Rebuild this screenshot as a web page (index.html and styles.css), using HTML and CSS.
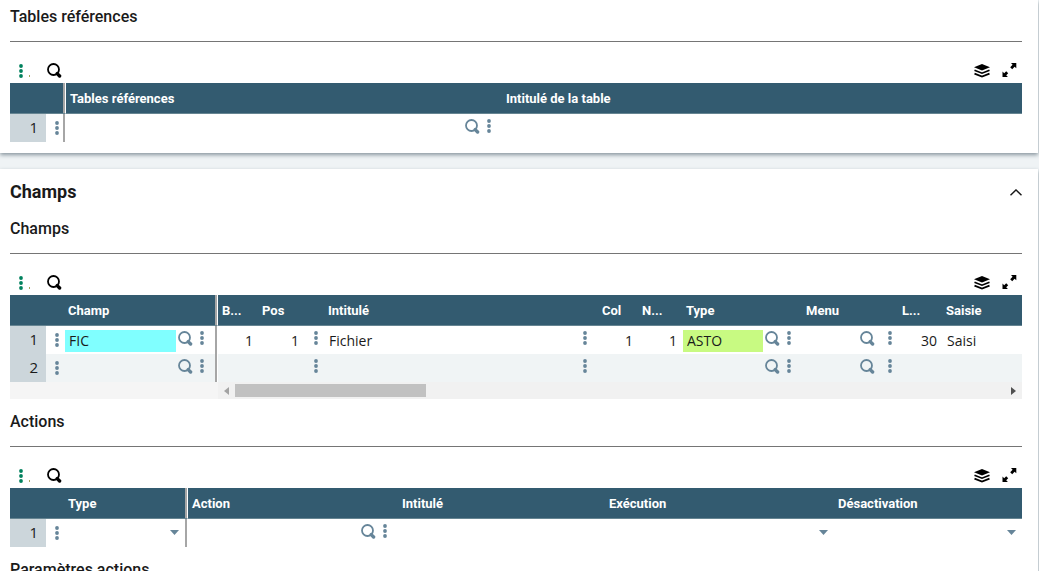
FILE: index.html
```html
<!DOCTYPE html>
<html lang="fr">
<head>
<meta charset="utf-8">
<title>Tables et champs</title>
<link rel="stylesheet" href="styles.css">
</head>
<body>
<svg class="sprite" aria-hidden="true">
  <symbol id="dots" viewBox="0 0 5 14"><circle cx="2" cy="2" r="1.9"/><circle cx="2" cy="7" r="1.9"/><circle cx="2" cy="12" r="1.9"/></symbol>
  <symbol id="search" viewBox="0 0 15 15"><circle cx="6.5" cy="6.5" r="5.5" fill="none" stroke="currentColor" stroke-width="1.8"/><path d="M10.2 10.6 12.6 13" stroke="currentColor" stroke-width="3.4" stroke-linecap="round"/></symbol>
  <symbol id="layers" viewBox="0 0 16 14"><path d="M8 0 16 3.2 8 6.4 0 3.2Z"/><path d="M.5 6.2 8 9.2l7.5-3M.5 9.6 8 12.6 15.5 9.6" fill="none" stroke="currentColor" stroke-width="1.7"/></symbol>
  <symbol id="expand" viewBox="0 0 15 15"><path d="M9 0H14.3V5.3L12.6 3.8 10.2 6.3 8.2 4.3 10.6 1.8ZM.5 8.6 2.2 10.2 4.2 8.3 6.2 10.3 4.2 12.3 5.9 14H.5Z"/></symbol>
  <symbol id="caret" viewBox="0 0 9 5"><path d="M0 0H9L4.5 5Z"/></symbol>
</svg>
<main class="page">
  <section class="card card-first">
    <section class="block">
      <h3 class="block-title">Tables références</h3>
      <div class="toolbar">
        <button class="icon-button tool-menu" aria-label="Menu"><svg class="i-dots"><use href="#dots"/></svg><span class="tick"></span></button>
        <button class="icon-button" aria-label="Rechercher"><svg class="i-search"><use href="#search"/></svg></button>
        <button class="icon-button push" aria-label="Couches"><svg class="i-layers"><use href="#layers"/></svg></button>
        <button class="icon-button" aria-label="Agrandir"><svg class="i-search"><use href="#expand"/></svg></button>
      </div>
      <table class="grid">
        <colgroup><col class="w-num"><col class="w-menu-split"><col class="w-reference"><col></colgroup>
        <thead><tr><th></th><th class="split"></th><th>Tables références</th><th>Intitulé de la table</th></tr></thead>
        <tbody><tr>
          <td class="num">1</td>
          <td class="menu split"><button class="icon-button" aria-label="Actions de ligne"><svg class="i-dots"><use href="#dots"/></svg></button></td>
          <td><div class="cell"><input class="field" aria-label="Tables références"><button class="icon-button" aria-label="Sélection"><svg class="i-search"><use href="#search"/></svg></button><button class="icon-button" aria-label="Options"><svg class="i-dots"><use href="#dots"/></svg></button></div></td>
          <td></td>
        </tr></tbody>
      </table>
    </section>
  </section>

  <section class="card">
    <header class="card-header">
      <h2 class="card-title">Champs</h2>
      <button class="icon-button" aria-label="Replier"><svg class="i-chevron" viewBox="0 0 12 7"><path d="M.5 6.3 6 .9l5.5 5.4" fill="none" stroke="currentColor" stroke-width="1.4"/></svg></button>
    </header>
    <section class="block">
      <h3 class="block-title">Champs</h3>
      <div class="toolbar">
        <button class="icon-button tool-menu" aria-label="Menu"><svg class="i-dots"><use href="#dots"/></svg><span class="tick"></span></button>
        <button class="icon-button" aria-label="Rechercher"><svg class="i-search"><use href="#search"/></svg></button>
        <button class="icon-button push" aria-label="Couches"><svg class="i-layers"><use href="#layers"/></svg></button>
        <button class="icon-button" aria-label="Agrandir"><svg class="i-search"><use href="#expand"/></svg></button>
      </div>
      <table class="grid">
        <colgroup><col class="w-num"><col class="w-menu"><col class="w-field"><col class="w-short"><col class="w-pos"><col class="w-menu-split"><col><col class="w-short"><col class="w-narrow"><col class="w-type"><col class="w-list"><col class="w-narrow"><col class="w-entry"></colgroup>
        <thead><tr><th></th><th></th><th class="split">Champ</th><th>B...</th><th>Pos</th><th></th><th>Intitulé</th><th>Col</th><th>N...</th><th>Type</th><th>Menu</th><th>L...</th><th>Saisie</th></tr></thead>
        <tbody>
          <tr>
            <td class="num">1</td>
            <td class="menu"><button class="icon-button" aria-label="Actions de ligne"><svg class="i-dots"><use href="#dots"/></svg></button></td>
            <td class="split"><div class="cell"><input class="field cyan" value="FIC" aria-label="Champ"><button class="icon-button" aria-label="Sélection"><svg class="i-search"><use href="#search"/></svg></button><button class="icon-button" aria-label="Options"><svg class="i-dots"><use href="#dots"/></svg></button></div></td>
            <td><div class="cell number"><input class="field" value="1" aria-label="Bloc"></div></td>
            <td><div class="cell number"><input class="field" value="1" aria-label="Pos"></div></td>
            <td><div class="cell lead"><button class="icon-button" aria-label="Options"><svg class="i-dots"><use href="#dots"/></svg></button></div></td>
            <td><div class="cell"><input class="field" value="Fichier" aria-label="Intitulé"><button class="icon-button" aria-label="Options"><svg class="i-dots"><use href="#dots"/></svg></button></div></td>
            <td><div class="cell number"><input class="field" value="1" aria-label="Col"></div></td>
            <td><div class="cell number"><input class="field" value="1" aria-label="Nombre"></div></td>
            <td><div class="cell"><input class="field green" value="ASTO" aria-label="Type"><button class="icon-button" aria-label="Sélection"><svg class="i-search"><use href="#search"/></svg></button><button class="icon-button" aria-label="Options"><svg class="i-dots"><use href="#dots"/></svg></button></div></td>
            <td><div class="cell spread"><input class="field" aria-label="Menu"><button class="icon-button" aria-label="Sélection"><svg class="i-search"><use href="#search"/></svg></button><button class="icon-button" aria-label="Options"><svg class="i-dots"><use href="#dots"/></svg></button></div></td>
            <td><div class="cell number"><input class="field" value="30" aria-label="Longueur"></div></td>
            <td><div class="cell"><input class="field" value="Saisi" aria-label="Saisie"></div></td>
          </tr>
          <tr class="alt">
            <td class="num">2</td>
            <td class="menu"><button class="icon-button" aria-label="Actions de ligne"><svg class="i-dots"><use href="#dots"/></svg></button></td>
            <td class="split"><div class="cell"><input class="field" aria-label="Champ"><button class="icon-button" aria-label="Sélection"><svg class="i-search"><use href="#search"/></svg></button><button class="icon-button" aria-label="Options"><svg class="i-dots"><use href="#dots"/></svg></button></div></td>
            <td></td><td></td>
            <td><div class="cell lead"><button class="icon-button" aria-label="Options"><svg class="i-dots"><use href="#dots"/></svg></button></div></td>
            <td><div class="cell"><input class="field" aria-label="Intitulé"><button class="icon-button" aria-label="Options"><svg class="i-dots"><use href="#dots"/></svg></button></div></td>
            <td></td><td></td>
            <td><div class="cell"><input class="field" aria-label="Type"><button class="icon-button" aria-label="Sélection"><svg class="i-search"><use href="#search"/></svg></button><button class="icon-button" aria-label="Options"><svg class="i-dots"><use href="#dots"/></svg></button></div></td>
            <td><div class="cell spread"><input class="field" aria-label="Menu"><button class="icon-button" aria-label="Sélection"><svg class="i-search"><use href="#search"/></svg></button><button class="icon-button" aria-label="Options"><svg class="i-dots"><use href="#dots"/></svg></button></div></td>
            <td></td><td></td>
          </tr>
        </tbody>
      </table>
      <div class="scroll">
        <div class="scroll-track">
          <svg class="i-arrow faded" viewBox="0 0 5 8"><path d="M5 0V8L0 4Z"/></svg>
          <div class="scroll-rail"><div class="scroll-thumb"></div></div>
          <svg class="i-arrow" viewBox="0 0 5 8"><path d="M0 0V8L5 4Z"/></svg>
        </div>
      </div>
    </section>

    <section class="block">
      <h3 class="block-title">Actions</h3>
      <div class="toolbar">
        <button class="icon-button tool-menu" aria-label="Menu"><svg class="i-dots"><use href="#dots"/></svg><span class="tick"></span></button>
        <button class="icon-button" aria-label="Rechercher"><svg class="i-search"><use href="#search"/></svg></button>
        <button class="icon-button push" aria-label="Couches"><svg class="i-layers"><use href="#layers"/></svg></button>
        <button class="icon-button" aria-label="Agrandir"><svg class="i-search"><use href="#expand"/></svg></button>
      </div>
      <table class="grid">
        <colgroup><col class="w-num"><col class="w-menu"><col class="w-kind"><col class="w-action"><col><col class="w-run"><col class="w-disable"></colgroup>
        <thead><tr><th></th><th></th><th class="split">Type</th><th>Action</th><th>Intitulé</th><th>Exécution</th><th>Désactivation</th></tr></thead>
        <tbody><tr>
          <td class="num">1</td>
          <td class="menu"><button class="icon-button" aria-label="Actions de ligne"><svg class="i-dots"><use href="#dots"/></svg></button></td>
          <td class="split"><div class="pick"><select aria-label="Type"><option></option></select><svg class="i-caret"><use href="#caret"/></svg></div></td>
          <td><div class="cell"><input class="field" aria-label="Action"><button class="icon-button" aria-label="Sélection"><svg class="i-search"><use href="#search"/></svg></button><button class="icon-button" aria-label="Options"><svg class="i-dots"><use href="#dots"/></svg></button></div></td>
          <td></td>
          <td><div class="pick"><select aria-label="Exécution"><option></option></select><svg class="i-caret"><use href="#caret"/></svg></div></td>
          <td><div class="pick"><select aria-label="Désactivation"><option></option></select><svg class="i-caret"><use href="#caret"/></svg></div></td>
        </tr></tbody>
      </table>
    </section>

    <section class="block">
      <h3 class="block-title">Paramètres actions</h3>
    </section>
  </section>
</main>
</body>
</html>
```
FILE: styles.css
```css
* { box-sizing: border-box; }

body {
  margin: 0;
  background: #eff3f5;
  color: #1a1a1a;
  font-family: "Open Sans", "Noto Sans", sans-serif;
  font-size: 14px;
}

svg { display: block; fill: currentColor; flex: none; }
.sprite { display: none; }

.page {
  height: 100vh;
  overflow: hidden;
  display: flex;
  flex-direction: column;
  gap: 16px;
  padding-right: 1px;
}

.card {
  flex: none;
  padding: 0 16px 0 10px;
  background: #fff;
  box-shadow: 0 2px 4px #8a979f;
}
.card-first { padding-top: 5px; }

.card-header {
  display: flex;
  align-items: center;
  justify-content: space-between;
  height: 48px;
  padding-bottom: 2px;
}
.card-title, .block-title {
  margin: 0;
  font-family: Roboto, Inter, sans-serif;
  line-height: 24px;
}
.card-title { font-size: 18px; font-weight: 700; }
.block-title {
  padding-bottom: 12px;
  border-bottom: 1px solid #757575;
  font-size: 16px;
  font-weight: 500;
}
.block { padding-bottom: 11px; }

.toolbar {
  display: flex;
  align-items: center;
  padding: 21px 5px 5px 9px;
  color: #000;
}
.icon-button {
  display: flex;
  padding: 0;
  border: 0;
  background: none;
  color: inherit;
  cursor: pointer;
}
.tool-menu { align-items: flex-end; gap: 5px; margin-right: 17px; color: #00815d; }
.tick { width: 1px; height: 2px; margin-bottom: 1px; background: #a6a65c; }
.push { margin: 0 12px 0 auto; }

.i-dots { width: 5px; height: 14px; }
.i-search { width: 15px; height: 15px; }
.i-layers { width: 16px; height: 14px; }
.i-caret { width: 9px; height: 5px; }
.i-arrow { width: 5px; height: 8px; }
.i-chevron { width: 12px; height: 7px; }

.grid {
  width: 100%;
  table-layout: fixed;
  border-collapse: separate;
  border-spacing: 0;
}
.grid th {
  height: 31px;
  padding: 0 4px;
  overflow: hidden;
  background: #335b70;
  border-bottom: 1px solid #668592;
  color: #fff;
  font-family: Roboto, Inter, sans-serif;
  font-size: 13px;
  font-weight: 700;
  text-align: left;
  white-space: nowrap;
}
.grid td { height: 28px; padding: 0; color: #668599; }
.grid .alt td { background: #f0f4f5; }
.grid td.num, .grid .alt td.num {
  padding: 0 8px 2px 0;
  background: #ccd6db;
  color: #1a1a1a;
  font-size: 15px;
  text-align: right;
}
.grid td.menu { padding-left: 9px; }
.grid .split {
  padding-right: 2px;
  border-right: 1px solid #fff;
  box-shadow: inset -2px 0 #a6a6a6;
}

.w-num { width: 36px; }
.w-menu { width: 18px; }
.w-menu-split { width: 20px; }
.w-reference { width: 436px; }
.w-field { width: 154px; }
.w-short { width: 40px; }
.w-pos { width: 46px; }
.w-narrow { width: 44px; }
.w-type { width: 120px; }
.w-list { width: 96px; }
.w-entry { width: 80px; }
.w-kind { width: 124px; }
.w-action { width: 210px; }
.w-run { width: 229px; }
.w-disable { width: 188px; }

.cell {
  display: flex;
  align-items: flex-start;
  height: 28px;
  padding: 4px 10px 2px 1px;
}
.cell .icon-button { margin-left: 7px; padding-top: 1px; }
.cell .field + .icon-button { margin-left: 2px; }
.cell.spread { padding-right: 5px; }
.cell.spread .icon-button + .icon-button { margin-left: 13px; }
.cell.number { padding: 4px 5px 2px 0; }
.cell.number .field { padding: 0 0 2px; text-align: right; }
.cell.lead { padding-left: 3px; padding-right: 0; }

.field {
  flex: 1;
  width: 100%;
  min-width: 0;
  height: 22px;
  padding: 0 4px 2px;
  border: 0;
  outline: 0;
  background: transparent;
  color: #1a1a1a;
  font: inherit;
}
.cyan { background: #80ffff; }
.green { background: #c8fa82; }

.pick { display: grid; align-items: center; height: 28px; padding: 0 6px 2px 0; }
.pick > * { grid-area: 1 / 1; }
.pick select {
  width: 100%;
  height: 22px;
  border: 0;
  appearance: none;
  background: transparent;
}
.pick .i-caret { justify-self: end; pointer-events: none; }

.scroll { display: flex; height: 17px; padding-left: 208px; background: #f5f5f5; }
.scroll-track {
  flex: 1;
  display: flex;
  align-items: center;
  gap: 6px;
  padding: 0 6px;
  background: #f1f1f1;
  color: #505050;
}
.scroll-rail { flex: 1; }
.scroll-thumb { width: 191px; height: 13px; background: #c1c1c1; }
.faded { color: #a3a3a3; }
```
